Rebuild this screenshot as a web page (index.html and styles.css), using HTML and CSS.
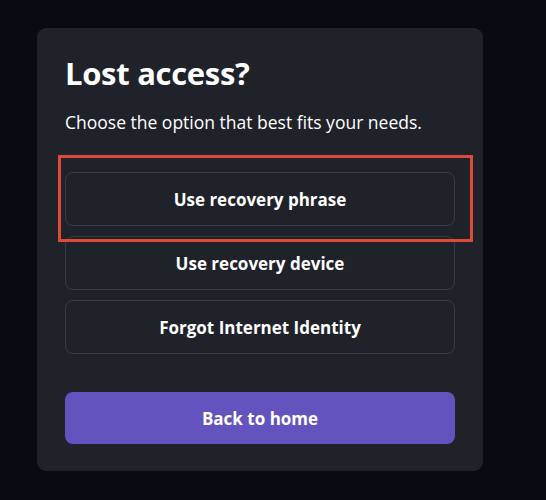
FILE: index.html
```html
<!DOCTYPE html>
<html lang="en">
<head>
  <meta charset="UTF-8">
  <meta name="viewport" content="width=device-width, initial-scale=1.0">
  <title>Lost access?</title>
  <link rel="stylesheet" href="styles.css">
</head>
<body>
  <div class="card">
    <h1>Lost access?</h1>
    <p class="lead">Choose the option that best fits your needs.</p>
    <div class="options">
      <button class="option">Use recovery phrase</button>
      <button class="option">Use recovery device</button>
      <button class="option">Forgot Internet Identity</button>
      <div class="highlight"></div> <!-- Red marker around first option -->
    </div>
    <button class="primary">Back to home</button>
  </div>
</body>
</html>
```

FILE: styles.css
```css
body {
  font-family: "Open Sans", Arial, sans-serif;
  margin: 0;
  padding: 28px 0 0 37px;
  height: 100vh;
  box-sizing: border-box;
  background-color: #080b12;
  color: #ffffff;
}

.card {
  width: 446px;
  box-sizing: border-box;
  background-color: #20222a;
  border-radius: 9px;
  padding: 25px 28px 27px 28px;
}

h1 {
  margin: 0;
  font-size: 31px;
  line-height: 40px;
  font-weight: 700;
  letter-spacing: -0.3px;
}

.lead {
  margin: 17px 0 0 0;
  font-size: 17.5px;
  line-height: 24px;
}

.options {
  position: relative;
  display: flex;
  flex-direction: column;
  gap: 10px;
  margin-top: 38px;
}

.option,
.primary {
  font-family: inherit;
  font-size: 17px;
  font-weight: 700;
  color: #ffffff;
  height: 54px;
  border-radius: 8px;
  cursor: pointer;
}

.option {
  background-color: transparent;
  border: 1px solid #393c46;
}

.highlight {
  position: absolute;
  top: -17px;
  left: -7px;
  right: -18px;
  height: 87px;
  box-sizing: border-box;
  border: 3px solid #de4a3a;
  pointer-events: none;
}

.primary {
  display: block;
  width: 100%;
  margin-top: 38px;
  height: 52px;
  background-color: #6353be;
  border: none;
}
```
